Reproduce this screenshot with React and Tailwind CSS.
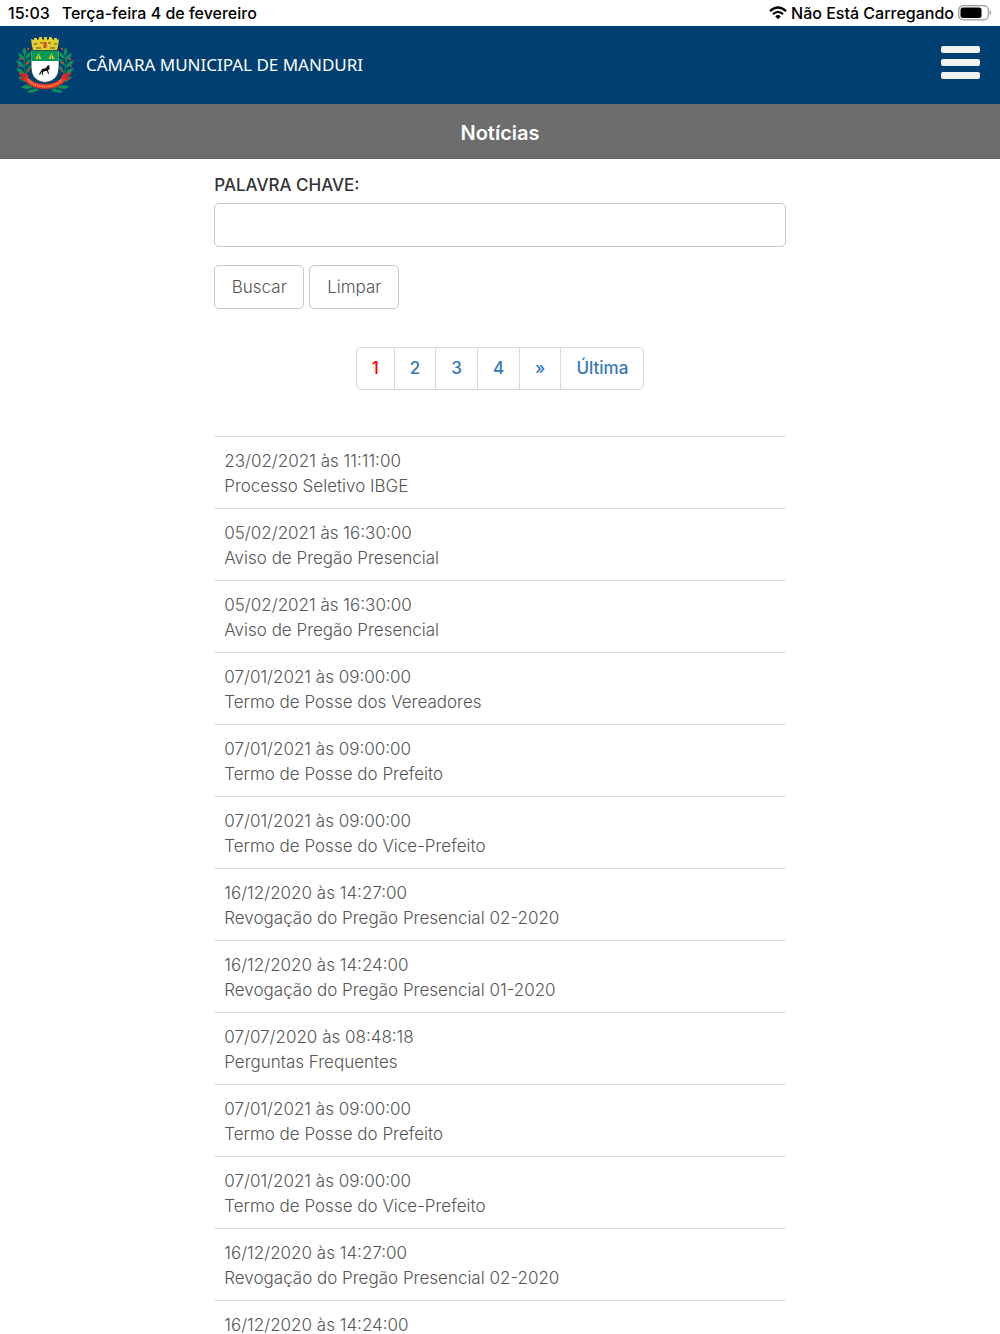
const news = [
  ["23/02/2021 às 11:11:00", "Processo Seletivo IBGE"],
  ["05/02/2021 às 16:30:00", "Aviso de Pregão Presencial"],
  ["05/02/2021 às 16:30:00", "Aviso de Pregão Presencial"],
  ["07/01/2021 às 09:00:00", "Termo de Posse dos Vereadores"],
  ["07/01/2021 às 09:00:00", "Termo de Posse do Prefeito"],
  ["07/01/2021 às 09:00:00", "Termo de Posse do Vice-Prefeito"],
  ["16/12/2020 às 14:27:00", "Revogação do Pregão Presencial 02-2020"],
  ["16/12/2020 às 14:24:00", "Revogação do Pregão Presencial 01-2020"],
  ["07/07/2020 às 08:48:18", "Perguntas Frequentes"],
  ["07/01/2021 às 09:00:00", "Termo de Posse do Prefeito"],
  ["07/01/2021 às 09:00:00", "Termo de Posse do Vice-Prefeito"],
  ["16/12/2020 às 14:27:00", "Revogação do Pregão Presencial 02-2020"],
  ["16/12/2020 às 14:24:00"],
];

const pages = ["1", "2", "3", "4", "»", "Última"];

function WifiIcon() {
  return (
    <svg width="18" height="14" viewBox="0 0 18 14" fill="none" stroke="#000" strokeWidth="2.3" aria-hidden="true">
      <path d="M1 5.2Q9-2.3 17 5.2" />
      <path d="M4 8.2Q9 3.6 14 8.2" />
      <path d="M6.2 10.3Q9 7.8 11.800 10.300L9 13.200Z" fill="#000" stroke="none" />
    </svg>
  );
}

function BatteryIcon() {
  return (
    <svg width="34" height="16" viewBox="0 0 34 16" aria-hidden="true">
      <rect x="0.700" y="0.700" width="29.600" height="14.200" rx="4.300" fill="#fff" stroke="#999" strokeWidth="1.200" />
      <rect x="2.500" y="2.500" width="21" height="10.600" rx="2.500" fill="#000" />
      <path d="M31.700 5.300c2 .8 2 4.200 0 5z" fill="#999" />
    </svg>
  );
}

function Branch() {
  return (
    <g>
      <path d="M22 53Q5 43 9 15" fill="none" stroke="#0b7a4c" strokeWidth="1.300" />
      <g fill="#10915a">
        <path d="M9 19Q5 15 8 10Q12 14 9 19Z" />
        <path d="M9 24Q3 22 2 16Q8 17 9 24Z" />
        <path d="M9 22Q10 16 15 15Q15 21 9 22Z" />
        <path d="M8 31Q2 29 0 23Q7 24 8 31Z" />
        <path d="M9 29Q10 23 15 21Q15 27 9 29Z" />
        <path d="M9 38Q3 37 0 31Q7 31 9 38Z" />
        <path d="M10 36Q11 30 15 28Q16 34 10 36Z" />
        <path d="M13 45Q6 46 2 40Q9 38 13 45Z" />
        <path d="M17 50Q10 54 5 50Q10 46 17 50Z" />
        <path d="M23 53Q16 57 11 55Q16 50 23 53Z" />
      </g>
      <g fill="#d33a35">
        <circle cx="12" cy="12" r="1.200" />
        <circle cx="4" cy="22" r="1.200" />
        <circle cx="11" cy="26" r="1.200" />
        <circle cx="3" cy="29" r="1.100" />
        <circle cx="12" cy="33" r="1.200" />
        <circle cx="4" cy="36" r="1.100" />
      </g>
    </g>
  );
}

function CoatOfArms() {
  return (
    <svg className="shrink-0" width="58" height="56" viewBox="0 0 58 56" role="img" aria-label="Brasão de Manduri">
      <Branch />
      <g transform="translate(58 0) scale(-1 1)">
        <Branch />
      </g>
      <path d="M15 2l3 1V1h3v2l2-1V0h3v2l2 1V0h3v3l2-1V0h3v2l2 1V1h3v2l2-1-1 7-1 4H17l-1-4z" fill="#e2cf2d" />
      <path d="M18 7h3M24 6h3M32 6h3M38 7h3M20 11h5M34 11h5" stroke="#877b1d" strokeWidth="1.500" />
      <rect x="27.500" y="5" width="3" height="6" fill="#d64a32" />
      <path d="M15 13.500h28V30q0 14-14 15.500Q15 44 15 30z" fill="#fff" stroke="#123d36" strokeWidth="0.800" />
      <path d="M15.400 14h27.200v10H15.400z" fill="#089957" />
      <path d="M22.500 16l-3 6h6zM35.500 16l-3 6h6z" fill="#d7d52c" />
      <path d="M22.500 18v4M35.500 18v4" stroke="#367d32" strokeWidth="0.800" />
      <path d="M26 32l4-1 2-3 2 1-1 1 1 2-2 1 1 4-1 0-1-3-2 0-2 1 0 3-1 0 0-3-1 1-1 2-1-1 2-3z" fill="#111" />
      <path d="M3 37l7-1 3 3-3 4H4l2-3zM55 37l-7-1-3 3 3 4h6l-2-3z" fill="#c82b27" />
      <path d="M10 38Q16 47 29 47T48 38l2 5Q43 52 29 52T8 43z" fill="#ed3029" />
      <path d="M12 42.500Q18 49.500 29 49.500T46 42.500" fill="none" stroke="#f3aa43" strokeWidth="1.800" strokeDasharray="1.300 0.900" />
    </svg>
  );
}

export default function App() {
  return (
    <div className="flex h-screen flex-col overflow-hidden bg-white font-['Inter',sans-serif] text-[#555]">
      <div className="flex h-[26px] shrink-0 items-center justify-between px-2 text-base font-medium text-black">
        <div className="flex gap-3">
          <span>15:03</span>
          <span>Terça-feira 4 de fevereiro</span>
        </div>
        <div className="flex items-center gap-1">
          <WifiIcon />
          <span>Não Está Carregando</span>
          <BatteryIcon />
        </div>
      </div>

      <header className="flex h-[78px] shrink-0 items-center justify-between bg-[#003f72] px-4">
        <a href="#" className="flex items-center gap-3 font-['Noto_Sans',sans-serif] text-[17px] leading-6 text-white">
          <CoatOfArms />
          <span>CÂMARA MUNICIPAL DE MANDURI</span>
        </a>
        <button type="button" aria-label="Menu" className="mr-1 mb-1.5 flex w-[39px] flex-col gap-1.5">
          <span className="h-[7px] w-full rounded-[2px] bg-[#f2f2f2]" />
          <span className="h-[7px] w-full rounded-[2px] bg-[#f2f2f2]" />
          <span className="h-[7px] w-full rounded-[2px] bg-[#f2f2f2]" />
        </button>
      </header>

      <h1 className="flex h-[55px] shrink-0 items-center justify-center border-b border-[#626262] bg-[#6d6d6d] pt-1 text-xl font-semibold text-white">
        Notícias
      </h1>

      <main className="min-h-0 flex-1 overflow-y-auto [scrollbar-width:none]">
        <div className="mx-auto w-4/7 pt-3">
          <form>
            <label htmlFor="keyword" className="block text-[17px] leading-7 font-medium text-[#333]">
              PALAVRA CHAVE:
            </label>
            <input id="keyword" type="text" className="mt-1 block h-11 w-full rounded-[5px] border border-[#c8c8c8] px-3 text-lg outline-none" />
            <div className="mt-[18px] flex gap-[5px] text-[17px] font-light">
              <button type="button" className="h-11 w-[90px] rounded-[5px] border border-[#c8c8c8] pt-0.5">Buscar</button>
              <button type="reset" className="h-11 w-[90px] rounded-[5px] border border-[#c8c8c8] pt-0.5">Limpar</button>
            </div>
          </form>

          <nav aria-label="Paginação" className="mt-[38px] flex justify-center">
            <ul className="flex h-[43px] divide-x divide-[#d8d8d8] rounded-[5px] border border-[#d8d8d8] text-[17px] font-medium text-[#337ab7]">
              {pages.map((p, i) => (
                <li key={p} className="flex">
                  <a href="#" aria-current={i === 0 ? "page" : undefined} className="flex items-center px-[15px] aria-[current=page]:text-[#f00]">
                    {p}
                  </a>
                </li>
              ))}
            </ul>
          </nav>

          <ul className="mt-[46px] text-[17px] leading-[25px] font-light">
            {news.map(([date, title], i) => (
              <li key={i} className="border-t border-[#d8d8d8] px-2.5 pt-3 pb-[9px]">
                <a href="#" className="block">
                  <span className="block">{date}</span>
                  {title && <span className="block">{title}</span>}
                </a>
              </li>
            ))}
          </ul>
        </div>
      </main>
    </div>
  );
}
